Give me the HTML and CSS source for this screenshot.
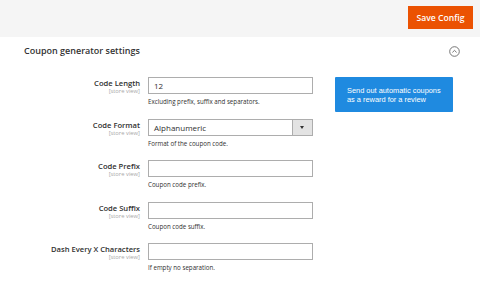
FILE: index.html
```html
<!DOCTYPE html>
<html lang="en">
<head>
    <meta charset="UTF-8">
    <title>Coupon generator settings</title>
    <link rel="stylesheet" href="styles.css">
</head>
<body>
    <div class="page-actions">
        <button class="save-btn">Save Config</button>
    </div>

    <div class="section">
        <div class="section-head">
            <h2>Coupon generator settings</h2>
            <svg class="collapse-icon" width="11" height="11" viewBox="0 0 11 11">
                <circle cx="5.5" cy="5.5" r="4.8" fill="none" stroke="#666" stroke-width="0.9"/>
                <polyline points="3.4,6.4 5.5,4.4 7.6,6.4" fill="none" stroke="#666" stroke-width="0.9"/>
            </svg>
        </div>

        <div class="section-body">
            <div class="fields">
                <div class="row">
                    <div class="label">Code Length<span class="scope">[store view]</span></div>
                    <div class="control">
                        <input type="text" value="12">
                        <div class="note">Excluding prefix, suffix and separators.</div>
                    </div>
                </div>
                <div class="row">
                    <div class="label">Code Format<span class="scope">[store view]</span></div>
                    <div class="control">
                        <div class="select">
                            <span>Alphanumeric</span>
                            <span class="select-arrow"></span>
                        </div>
                        <div class="note">Format of the coupon code.</div>
                    </div>
                </div>
                <div class="row">
                    <div class="label">Code Prefix<span class="scope">[store view]</span></div>
                    <div class="control">
                        <input type="text">
                        <div class="note">Coupon code prefix.</div>
                    </div>
                </div>
                <div class="row">
                    <div class="label">Code Suffix<span class="scope">[store view]</span></div>
                    <div class="control">
                        <input type="text">
                        <div class="note">Coupon code suffix.</div>
                    </div>
                </div>
                <div class="row">
                    <div class="label">Dash Every X Characters<span class="scope">[store view]</span></div>
                    <div class="control">
                        <input type="text">
                        <div class="note">If empty no separation.</div>
                    </div>
                </div>
            </div>

            <div class="promo">Send out automatic coupons as a reward for a review</div>
        </div>
    </div>
</body>
</html>
```

FILE: styles.css
```css
body {
    margin: 0;
    font-family: "Open Sans", Arial, sans-serif;
    color: #303030;
    background-color: #fff;
}
.page-actions {
    height: 37px;
    background-color: #f5f5f5;
    display: flex;
    justify-content: flex-end;
    align-items: flex-start;
    padding: 6px 7px 0 0;
    box-sizing: border-box;
}
.save-btn {
    width: 65px;
    height: 23px;
    background-color: #eb5202;
    color: #fff;
    border: none;
    padding: 0;
    font-family: "Open Sans", Arial, sans-serif;
    font-size: 8.6px;
    font-weight: 600;
}
.section-head {
    display: flex;
    justify-content: space-between;
    align-items: center;
    height: 27px;
    padding: 0 20px 0 24px;
}
.section-head h2 {
    margin: 0;
    font-size: 9px;
    font-weight: 600;
    color: #333;
}
.collapse-icon {
    display: block;
    margin-top: 1px;
}
.section-body {
    display: flex;
    align-items: flex-start;
    padding-top: 13px;
}
.fields {
    width: 313px;
}
.row {
    display: flex;
    height: 41.5px;
}
.label {
    width: 140px;
    text-align: right;
    font-size: 7.6px;
    font-weight: 600;
    line-height: 10px;
    padding-top: 1px;
    color: #303030;
}
.scope {
    display: block;
    font-size: 5.8px;
    font-weight: 400;
    line-height: 7px;
    color: #a8a8a8;
}
.control {
    margin-left: 8px;
    width: 165px;
}
input, .select {
    display: block;
    width: 165px;
    height: 17px;
    border: 1px solid #adadad;
    box-sizing: border-box;
    padding: 0 5px;
    font-family: "Open Sans", Arial, sans-serif;
    font-size: 8px;
    color: #303030;
    margin: 0;
}
.select {
    display: flex;
    align-items: center;
    justify-content: space-between;
    padding-right: 0;
}
.select-arrow {
    width: 19px;
    height: 15px;
    background-color: #e3e3e3;
    border-left: 1px solid #adadad;
    position: relative;
}
.select-arrow::after {
    content: "";
    position: absolute;
    left: 7px;
    top: 6px;
    border-left: 2.5px solid transparent;
    border-right: 2.5px solid transparent;
    border-top: 3px solid #333;
}
.note {
    font-size: 6.2px;
    line-height: 9px;
    margin-top: 3px;
    color: #303030;
}
.promo {
    margin-left: 22px;
    width: 118px;
    height: 35px;
    box-sizing: border-box;
    background-color: #1f8ae0;
    color: #fff;
    font-family: "Liberation Sans", Arial, sans-serif;
    font-size: 7.4px;
    line-height: 9px;
    padding: 9px 12px 0 12px;
    border-radius: 1px;
}
```
